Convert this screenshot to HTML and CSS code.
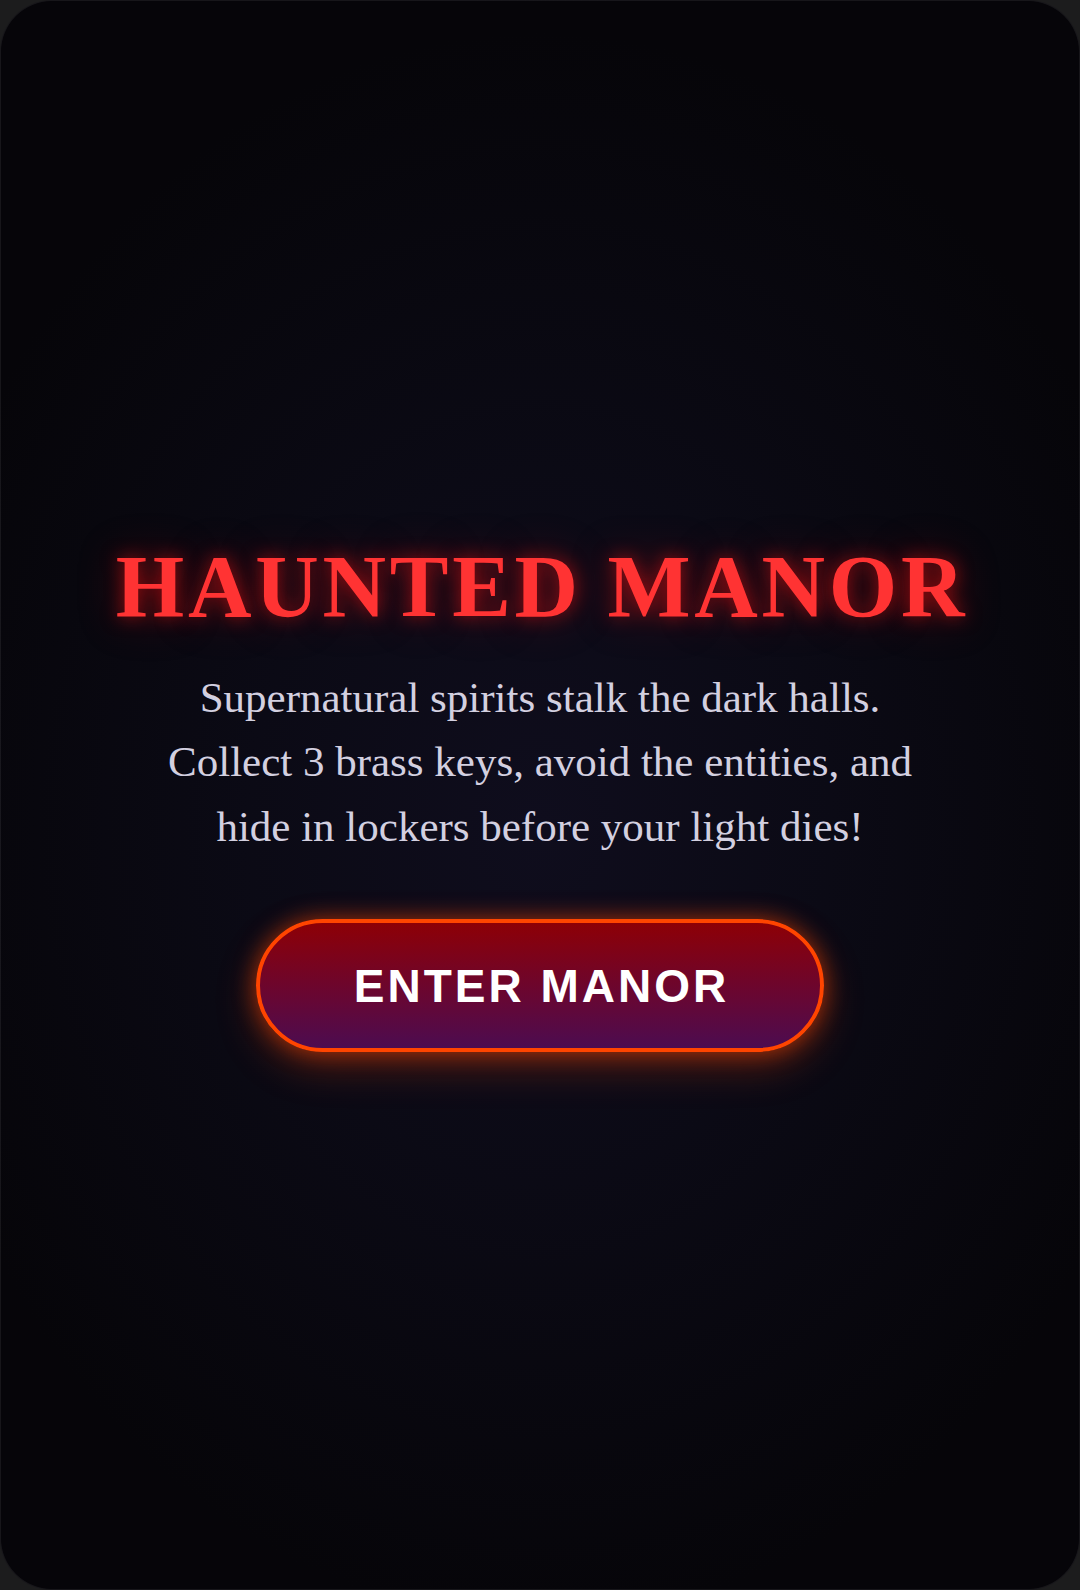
FILE: index.html
```html
<!DOCTYPE html>
<html lang="en">
<head>
<meta charset="utf-8">
<title>Haunted Manor</title>
<link rel="stylesheet" href="styles.css">
</head>
<body>
  <main class="screen">
    <section class="intro">
      <h1 class="title">HAUNTED MANOR</h1>
      <p class="blurb">Supernatural spirits stalk the dark halls.<br>Collect 3 brass keys, avoid the entities, and<br>hide in lockers before your light dies!</p>
      <button class="start" type="button">ENTER MANOR</button>
    </section>
  </main>
</body>
</html>
```
FILE: styles.css
```css
html, body {
  margin: 0;
  padding: 0;
  width: 1080px;
  height: 1590px;
  background: #1c1c1d;
  overflow: hidden;
}

.screen {
  box-sizing: border-box;
  width: 1080px;
  height: 1590px;
  border-radius: 52px;
  border: 1px solid rgba(255, 255, 255, 0.07);
  background: radial-gradient(ellipse 60% 50% at 50% 52%, #0f0d1d 0%, #0b0a15 45%, #060509 100%);
  display: flex;
  align-items: center;
  justify-content: center;
}

.intro {
  display: flex;
  flex-direction: column;
  align-items: center;
  text-align: center;
}

.title {
  margin: 0;
  font-family: "Liberation Serif", "Times New Roman", serif;
  font-weight: 700;
  font-size: 88px;
  line-height: 1.107;
  letter-spacing: 3.7px;
  margin-right: -4px;
  color: #ff3333;
  text-shadow: 0 0 18px rgba(255, 20, 20, 0.55), 0 0 44px rgba(200, 0, 0, 0.4);
}

.blurb {
  margin: 31px 0 0;
  font-family: "Liberation Serif", "Times New Roman", serif;
  font-size: 43px;
  line-height: 64.5px;
  color: #d3d0e0;
}

.start {
  margin-top: 60px;
  box-sizing: border-box;
  width: 568px;
  height: 133px;
  border: 4px solid #ff4500;
  border-radius: 67px;
  background: linear-gradient(180deg, #8d0006 0%, #6a0630 55%, #4c0c50 100%);
  color: #ffffff;
  font-family: "Liberation Sans", Arial, sans-serif;
  font-weight: 700;
  font-size: 46px;
  letter-spacing: 3px;
  padding: 0 0 0 3px;
  box-shadow: 0 0 22px rgba(255, 69, 0, 0.55), 0 14px 40px rgba(255, 69, 0, 0.3);
  cursor: pointer;
}
```
